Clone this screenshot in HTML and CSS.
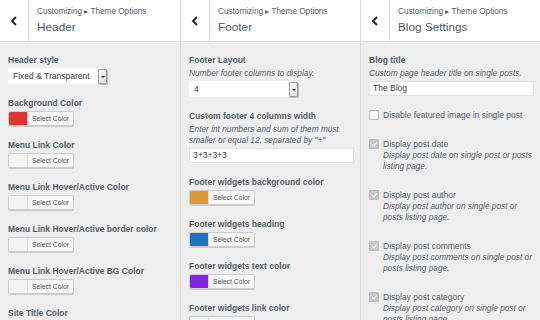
FILE: index.html
```html
<!DOCTYPE html>
<html lang="en">
<head>
  <meta charset="UTF-8">
  <title>Theme Options</title>
  <link rel="stylesheet" href="styles.css">
</head>
<body>
  <div class="panels">

    <!-- Header panel -->
    <section class="panel">
      <header class="panel-head">
        <button class="back" type="button">
          <svg width="8" height="10" viewBox="0 0 8 10"><path d="M6 1 L2 5 L6 9" fill="none" stroke="#23282d" stroke-width="2"/></svg>
        </button>
        <div class="head-text">
          <span class="crumb">Customizing &#9656; Theme Options</span>
          <h2>Header</h2>
        </div>
      </header>
      <div class="panel-body">
        <div class="control">
          <label>Header style</label>
          <div class="select wide-select"><span>Fixed &amp; Transparent</span><i class="arrow"></i></div>
        </div>
        <div class="control">
          <label>Background Color</label>
          <div class="color-btn"><span class="swatch" style="background:#dd3333"></span><span class="btn-text">Select Color</span></div>
        </div>
        <div class="control">
          <label>Menu Link Color</label>
          <div class="color-btn"><span class="swatch"></span><span class="btn-text">Select Color</span></div>
        </div>
        <div class="control">
          <label>Menu Link Hover/Active Color</label>
          <div class="color-btn"><span class="swatch"></span><span class="btn-text">Select Color</span></div>
        </div>
        <div class="control">
          <label>Menu Link Hover/Active border color</label>
          <div class="color-btn"><span class="swatch"></span><span class="btn-text">Select Color</span></div>
        </div>
        <div class="control">
          <label>Menu Link Hover/Active BG Color</label>
          <div class="color-btn"><span class="swatch"></span><span class="btn-text">Select Color</span></div>
        </div>
        <div class="control">
          <label>Site Title Color</label>
          <div class="color-btn"><span class="swatch"></span><span class="btn-text">Select Color</span></div>
        </div>
      </div>
    </section>

    <!-- Footer panel -->
    <section class="panel">
      <header class="panel-head">
        <button class="back" type="button">
          <svg width="8" height="10" viewBox="0 0 8 10"><path d="M6 1 L2 5 L6 9" fill="none" stroke="#23282d" stroke-width="2"/></svg>
        </button>
        <div class="head-text">
          <span class="crumb">Customizing &#9656; Theme Options</span>
          <h2>Footer</h2>
        </div>
      </header>
      <div class="panel-body">
        <div class="control">
          <label>Footer Layout</label>
          <p class="desc">Number footer columns to display.</p>
          <div class="select num-select"><span>4</span><i class="arrow"></i></div>
        </div>
        <div class="control">
          <label>Custom footer 4 columns width</label>
          <p class="desc">Enter int numbers and sum of them must smaller or equal 12, separated by "+"</p>
          <div class="text-input">3+3+3+3</div>
        </div>
        <div class="control">
          <label>Footer widgets background color</label>
          <div class="color-btn"><span class="swatch" style="background:#dd9933"></span><span class="btn-text">Select Color</span></div>
        </div>
        <div class="control">
          <label>Footer widgets heading</label>
          <div class="color-btn"><span class="swatch" style="background:#1e73be"></span><span class="btn-text">Select Color</span></div>
        </div>
        <div class="control">
          <label>Footer widgets text color</label>
          <div class="color-btn"><span class="swatch" style="background:#8224e3"></span><span class="btn-text">Select Color</span></div>
        </div>
        <div class="control">
          <label>Footer widgets link color</label>
          <div class="color-btn"><span class="swatch"></span><span class="btn-text">Select Color</span></div>
        </div>
      </div>
    </section>

    <!-- Blog panel -->
    <section class="panel">
      <header class="panel-head">
        <button class="back" type="button">
          <svg width="8" height="10" viewBox="0 0 8 10"><path d="M6 1 L2 5 L6 9" fill="none" stroke="#23282d" stroke-width="2"/></svg>
        </button>
        <div class="head-text">
          <span class="crumb">Customizing &#9656; Theme Options</span>
          <h2>Blog Settings</h2>
        </div>
      </header>
      <div class="panel-body">
        <div class="control">
          <label>Blog title</label>
          <p class="desc">Custom page header title on single posts.</p>
          <div class="text-input">The Blog</div>
        </div>
        <div class="check-row">
          <span class="box"></span>
          <div class="check-text">
            <span class="check-label">Disable featured image in single post</span>
          </div>
        </div>
        <div class="check-row">
          <span class="box checked"></span>
          <div class="check-text">
            <span class="check-label">Display post date</span>
            <p class="desc">Display post date on single post or posts listing page.</p>
          </div>
        </div>
        <div class="check-row">
          <span class="box checked"></span>
          <div class="check-text">
            <span class="check-label">Display post author</span>
            <p class="desc">Display post author on single post or posts listing page.</p>
          </div>
        </div>
        <div class="check-row">
          <span class="box checked"></span>
          <div class="check-text">
            <span class="check-label">Display post comments</span>
            <p class="desc">Display post comments on single post or posts listing page.</p>
          </div>
        </div>
        <div class="check-row">
          <span class="box checked"></span>
          <div class="check-text">
            <span class="check-label">Display post category</span>
            <p class="desc">Display post category on single post or posts listing page.</p>
          </div>
        </div>
      </div>
    </section>

  </div>
</body>
</html>
```

FILE: styles.css
```css
body {
  margin: 0;
  font-family: "Liberation Sans", Arial, sans-serif;
  background-color: #eeeeee;
  color: #555d66;
  overflow: hidden;
}

.panels {
  display: grid;
  grid-template-columns: 180px 180px 180px;
  height: 320px;
}

.panel {
  border-left: 1px solid #dddddd;
  overflow: hidden;
}

.panel:first-child {
  border-left: none;
}

.panel-head {
  display: flex;
  height: 41px;
  background-color: #ffffff;
  border-bottom: 1px solid #dddddd;
}

.back {
  width: 29px;
  padding: 0;
  border: none;
  border-right: 1px solid #dddddd;
  background: #ffffff;
  display: flex;
  align-items: center;
  justify-content: center;
}

.head-text {
  padding: 6px 0 0 8px;
}

.crumb {
  display: block;
  font-size: 8.2px;
  line-height: 12px;
  color: #555d66;
}

.head-text h2 {
  margin: 1px 0 0;
  font-size: 11.8px;
  font-weight: normal;
  line-height: 16px;
  color: #50575e;
}

.panel-body {
  padding: 12px 8px 0;
}

.control {
  margin-bottom: 13px;
}

.control label {
  display: block;
  font-size: 8.5px;
  font-weight: bold;
  line-height: 12px;
  color: #555d66;
  margin-bottom: 2px;
}

.desc {
  margin: 1px 0 2px;
  font-size: 8.3px;
  font-style: italic;
  line-height: 11px;
  color: #555d66;
}

/* fake selects */
.select {
  display: flex;
  height: 16px;
  background: #ffffff;
  font-size: 8.5px;
  color: #32373c;
}

.select span {
  flex: 1;
  padding-left: 5px;
  line-height: 16px;
}

.wide-select {
  width: 99px;
}

.num-select {
  width: 109px;
}

.arrow {
  width: 7px;
  margin: 1px 0 0;
  border: 1px solid #9a9a9a;
  border-radius: 1px;
  background: linear-gradient(#fafafa, #e2e2e2);
  box-shadow: 1px 1px 0 #bbbbbb;
  position: relative;
}

.arrow::after {
  content: "";
  position: absolute;
  left: 1.5px;
  top: 6px;
  border-left: 2px solid transparent;
  border-right: 2px solid transparent;
  border-top: 2px solid #222;
}

.text-input {
  height: 13px;
  width: 160px;
  background: #ffffff;
  border: 1px solid #e2e2e2;
  font-size: 8.5px;
  line-height: 13px;
  padding-left: 3px;
  color: #32373c;
}

/* color picker button */
.color-btn {
  display: flex;
  width: fit-content;
  height: 13px;
  margin-top: 1px;
  border: 1px solid #cccccc;
  border-radius: 2px;
  background: #f7f7f7;
  box-shadow: 0 1px 0 #cccccc;
  overflow: hidden;
}

.swatch {
  width: 18px;
  background: #f4f4f4;
  border-right: 1px solid #dddddd;
}

.btn-text {
  width: 45px;
  text-align: center;
  font-size: 6.8px;
  line-height: 13px;
  color: #555555;
}

/* checkboxes */
.check-row {
  display: flex;
  gap: 4px;
  margin-bottom: 17px;
}

.box {
  flex: none;
  width: 8px;
  height: 8px;
  margin-top: 1px;
  border: 1px solid #b4b9be;
  border-radius: 1px;
  background: #ffffff;
  position: relative;
}

.box.checked {
  background: #c6c6c6;
  border-color: #bdbdbd;
}

.box.checked::after {
  content: "";
  position: absolute;
  left: 2.5px;
  top: 0.5px;
  width: 2px;
  height: 4px;
  border-right: 1.5px solid #f7f7f7;
  border-bottom: 1.5px solid #f7f7f7;
  transform: rotate(40deg);
}

.check-label {
  display: block;
  font-size: 8.5px;
  line-height: 12px;
  color: #555d66;
}

.check-text .desc {
  margin: 0;
}
```
